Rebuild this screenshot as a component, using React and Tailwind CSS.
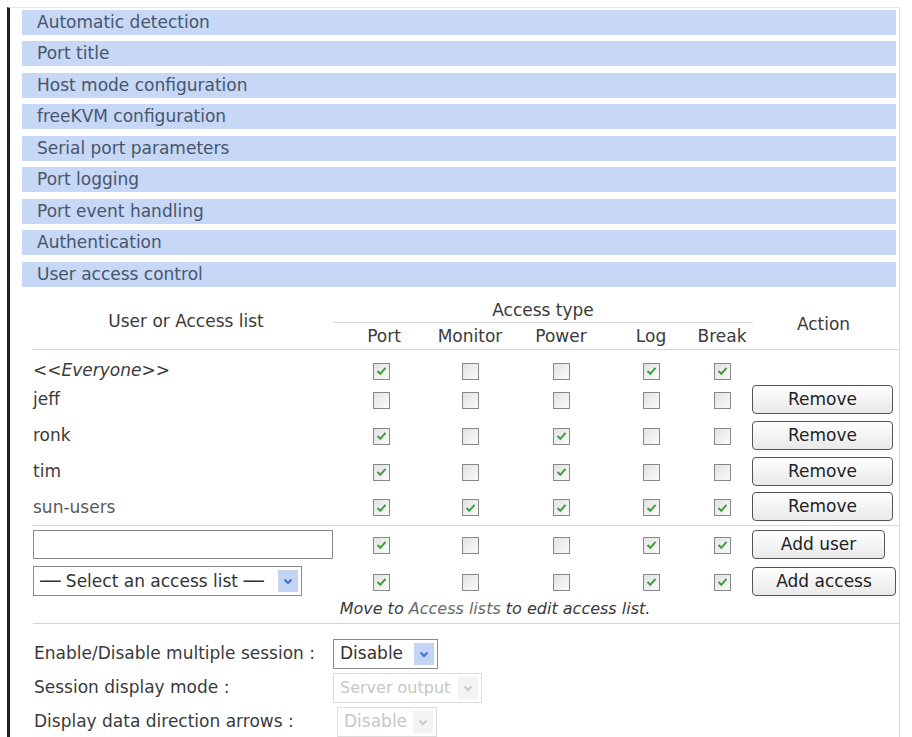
import React from "react";

const sections = [
  "Automatic detection",
  "Port title",
  "Host mode configuration",
  "freeKVM configuration",
  "Serial port parameters",
  "Port logging",
  "Port event handling",
  "Authentication",
  "User access control",
];

const users = [
  { name: "jeff", checks: [0, 0, 0, 0, 0] },
  { name: "ronk", checks: [1, 0, 1, 0, 0] },
  { name: "tim", checks: [1, 0, 1, 0, 0] },
  { name: "sun-users", checks: [1, 1, 1, 1, 1], faded: true },
];

const Check = ({ on }) => (
  <span className="inline-flex w-[17px] h-[17px] border border-[#888] bg-gradient-to-br from-[#e2e2e2] to-[#fbfbfb] items-center justify-center align-middle">
    {on ? (
      <svg width="11" height="10" viewBox="0 0 11 10">
        <path d="M1.5 5 L4.3 7.8 L9.5 1.8" fill="none" stroke="#3f9d3f" strokeWidth="2" />
      </svg>
    ) : null}
  </span>
);

const Btn = ({ children, w = "w-[141px]" }) => (
  <button className={`${w} h-[29px] rounded-[4px] border border-[#555] bg-gradient-to-b from-white to-[#e9e9e9] text-[17px] text-[#222] leading-none`}>
    {children}
  </button>
);

const Arrow = ({ dim }) => (
  <span className={`w-[20px] h-[22px] shrink-0 flex items-center justify-center ${dim ? "bg-[#f3f3f3]" : "bg-[#c4d4f4]"}`}>
    <svg width="10" height="7" viewBox="0 0 10 7">
      <path d="M1.5 1.5 L5 5 L8.5 1.5" fill="none" stroke={dim ? "#cacaca" : "#3f6fd4"} strokeWidth="2" />
    </svg>
  </span>
);

const FakeSelect = ({ label, w, dim, size = "text-[17px]" }) => (
  <div className={`${w} ${size} h-[30px] flex items-center justify-between border ${dim ? "border-[#dcdcdc] text-[#c6c6c6]" : "border-[#8a8a8a] text-[#333]"} pl-[6px] pr-[3px] bg-white`}>
    <span className="whitespace-nowrap">{label}</span>
    <Arrow dim={dim} />
  </div>
);

const CheckCells = ({ checks }) =>
  checks.map((c, i) => (
    <td key={i} className="text-center">
      <Check on={c} />
    </td>
  ));

export default function App() {
  return (
    <div className="w-[912px] h-[737px] bg-white overflow-hidden pt-[7px] text-[#3a3a3a]" style={{ fontFamily: '"DejaVu Sans", Verdana, sans-serif' }}>
      <div className="ml-[7px] w-[893px] h-[740px] border-l-[3px] border-l-[#222] border-r border-r-[#dcdcdc] border-t border-t-[#e6e6e6] pt-[2px] pl-[12px] pr-[3px]">
        {sections.map((s, i) => (
          <div key={s} className={`h-[25px] ${i % 2 ? "mb-[7px]" : "mb-[6px]"} bg-[#c7d7f6] pl-[15px] flex items-center text-[17px] text-[#46566c]`}>
            {s}
          </div>
        ))}

        <table className="ml-[11px] w-[867px] table-fixed border-collapse text-[17px] leading-[20px]">
          <colgroup>
            <col className="w-[306px]" />
            <col className="w-[84px]" />
            <col className="w-[94px]" />
            <col className="w-[88px]" />
            <col className="w-[92px]" />
            <col className="w-[50px]" />
            <col />
          </colgroup>
          <thead>
            <tr className="h-[30px]">
              <th rowSpan={2} className="font-normal text-center align-middle border-b border-[#d4d4d4]">User or Access list</th>
              <th colSpan={5} className="font-normal text-center align-bottom p-0">
                <div className="mx-[-6px] border-b border-[#d4d4d4] pb-[2px]">Access type</div>
              </th>
              <th rowSpan={2} className="font-normal text-center align-middle pt-[6px] border-b border-[#d4d4d4]">Action</th>
            </tr>
            <tr className="h-[26px] border-b border-[#d4d4d4]">
              <th className="font-normal pl-[6px]">Port</th>
              <th className="font-normal">Monitor</th>
              <th className="font-normal">Power</th>
              <th className="font-normal">Log</th>
              <th className="font-normal">Break</th>
            </tr>
          </thead>
          <tbody>
            <tr className="h-[32px]">
              <td className="pt-[10px] italic">&lt;&lt;Everyone&gt;&gt;</td>
              {[1, 0, 0, 1, 1].map((c, i) => (
                <td key={i} className="text-center pt-[10px]">
                  <Check on={c} />
                </td>
              ))}
              <td />
            </tr>
            {users.map((u) => (
              <tr key={u.name} className="h-[36px]">
                <td className={u.faded ? "text-[#5a5a5a]" : ""}>{u.name}</td>
                <CheckCells checks={u.checks} />
                <td className="pl-[5px]">
                  <Btn>Remove</Btn>
                </td>
              </tr>
            ))}
            <tr className="h-[38px] border-t border-[#d4d4d4]">
              <td>
                <input className="w-[300px] h-[29px] border border-[#8a8a8a] outline-none block" />
              </td>
              <CheckCells checks={[1, 0, 0, 1, 1]} />
              <td className="pl-[5px]">
                <Btn w="w-[133px]">Add user</Btn>
              </td>
            </tr>
            <tr className="h-[36px]">
              <td>
                <FakeSelect label="── Select an access list ──" w="w-[269px]" />
              </td>
              <CheckCells checks={[1, 0, 0, 1, 1]} />
              <td className="pl-[5px]">
                <Btn w="w-[144px]">Add access</Btn>
              </td>
            </tr>
            <tr className="h-[22px] border-b border-[#d4d4d4]">
              <td colSpan={7} className="text-center italic text-[16px] pl-[57px] pb-[4px] align-top">
                Move to <span className="text-[#6a6a6a]">Access lists</span> to edit access list.
              </td>
            </tr>
          </tbody>
        </table>

        <div className="ml-[12px] mt-[14px] flex flex-col gap-[2px] text-[17px]">
          <div className="flex items-center h-[32px]">
            <span className="w-[299px] whitespace-nowrap">Enable/Disable multiple session :</span>
            <FakeSelect label="Disable" w="w-[105px]" />
          </div>
          <div className="flex items-center h-[32px]">
            <span className="w-[299px] whitespace-nowrap">Session display mode :</span>
            <FakeSelect label="Server output" w="w-[149px]" size="text-[16px]" dim />
          </div>
          <div className="flex items-center h-[32px]">
            <span className="w-[303px] whitespace-nowrap">Display data direction arrows :</span>
            <FakeSelect label="Disable" w="w-[100px]" dim />
          </div>
        </div>
      </div>
    </div>
  );
}
